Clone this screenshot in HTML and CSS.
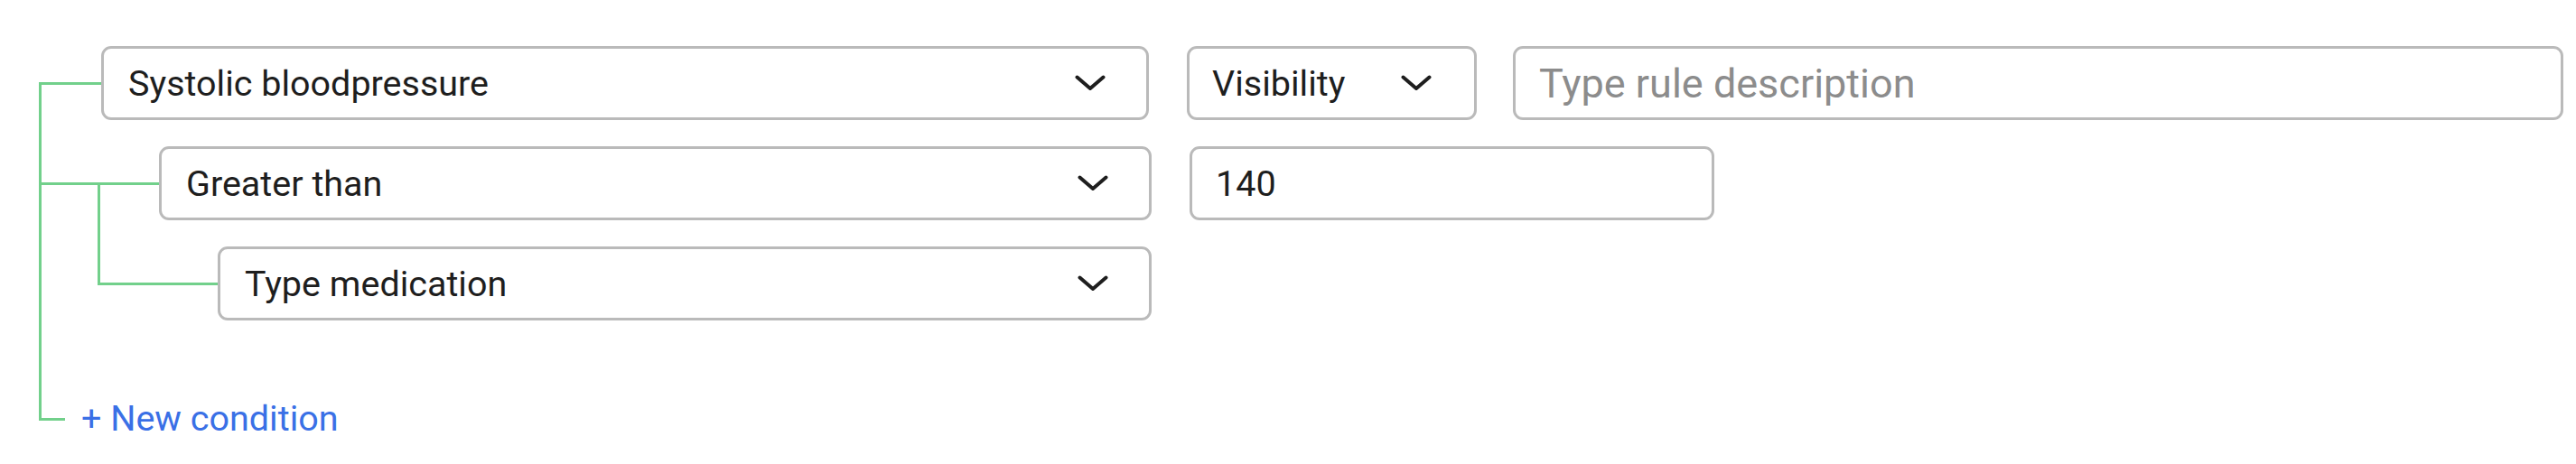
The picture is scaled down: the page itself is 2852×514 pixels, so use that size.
FILE: index.html
```html
<!DOCTYPE html>
<html lang="en">
<head>
<meta charset="utf-8">
<title>Rule conditions</title>
<link rel="stylesheet" href="styles.css">
</head>
<body>
<div class="tree">
  <div class="row">
    <div class="elbow e1">
      <span class="up first"></span>
      <span class="down"></span>
    </div>
    <div class="select s1">
      <span class="label">Systolic bloodpressure</span>
      <svg class="chev" viewBox="0 0 34 18" width="34" height="18"><polyline points="2.5,2.5 17,15 31.5,2.5"/></svg>
    </div>
    <div class="select vis">
      <span class="label">Visibility</span>
      <svg class="chev" viewBox="0 0 34 18" width="34" height="18"><polyline points="2.5,2.5 17,15 31.5,2.5"/></svg>
    </div>
    <input class="field desc" type="text" placeholder="Type rule description">
  </div>

  <div class="row">
    <div class="elbow e2">
      <span class="up"></span>
      <span class="down"><span class="sub"></span></span>
    </div>
    <div class="select s2">
      <span class="label">Greater than</span>
      <svg class="chev" viewBox="0 0 34 18" width="34" height="18"><polyline points="2.5,2.5 17,15 31.5,2.5"/></svg>
    </div>
    <input class="field num" type="text" value="140">
  </div>

  <div class="row">
    <div class="elbow e3">
      <span class="up pass"><span class="sub-up"></span></span>
      <span class="down"></span>
    </div>
    <div class="select s3 spaced">
      <span class="label">Type medication</span>
      <svg class="chev" viewBox="0 0 34 18" width="34" height="18"><polyline points="2.5,2.5 17,15 31.5,2.5"/></svg>
    </div>
  </div>

  <div class="row">
    <div class="elbow e4">
      <span class="up"></span>
      <span class="down last"></span>
    </div>
    <a class="add" href="#">+ New condition</a>
  </div>
</div>
</body>
</html>
```

FILE: styles.css
```css
* {
  box-sizing: border-box;
}

body {
  margin: 0;
  background: #ffffff;
  font-family: Roboto, "Liberation Sans", Arial, sans-serif;
  color: #202020;
}

.tree {
  display: flex;
  flex-direction: column;
  padding: 51px 0 0 43px;
}

.row {
  display: flex;
  align-items: stretch;
}

/* connector lines */
.elbow {
  flex: none;
  display: flex;
  flex-direction: column;
}

.e1 { width: 69px; }
.e2 { width: 133px; }
.e3 { width: 198px; }
.e4 { width: 29px; }

.up {
  display: flex;
  height: 43px;
  border-left: 3px solid #72d08b;
  border-bottom: 3px solid #72d08b;
}

.up.first {
  border-left: none;
}

.up.pass {
  border-bottom: none;
}

.down {
  display: flex;
  flex: 1;
  border-left: 3px solid #72d08b;
}

.down.last {
  border-left: none;
}

.sub {
  margin-left: 62px;
  border-left: 3px solid #72d08b;
}

.sub-up {
  flex: 1;
  margin-left: 62px;
  border-left: 3px solid #72d08b;
  border-bottom: 3px solid #72d08b;
}

/* controls */
.select,
.field {
  flex: none;
  height: 82px;
  margin-right: 42px;
  margin-bottom: 29px;
  border: 3px solid #bababa;
  border-radius: 11px;
  background: #ffffff;
  font-family: Roboto, "Liberation Sans", Arial, sans-serif;
  font-size: 39.5px;
  color: #1e1e1e;
}

.select {
  display: flex;
  align-items: center;
  justify-content: space-between;
  padding: 0 45px 0 27px;
}

.select.spaced {
  margin-bottom: 68px;
}

.s1 { width: 1160px; }
.s2 { width: 1099px; }
.s3 { width: 1034px; }

.vis {
  width: 321px;
  margin-right: 40px;
  padding-right: 47px;
  padding-left: 25px;
}

.label {
  white-space: nowrap;
}

.chev {
  display: block;
  flex: none;
}

.chev polyline {
  fill: none;
  stroke: #1e1e1e;
  stroke-width: 4;
  stroke-linecap: round;
  stroke-linejoin: round;
}

.field {
  padding: 0 26px;
  outline: none;
}

.field::placeholder {
  color: #8c8c8c;
  opacity: 1;
}

.desc {
  width: 1163px;
  font-size: 45px;
}

.num {
  width: 581px;
}

.add {
  margin-left: 18px;
  height: 82px;
  line-height: 82px;
  font-size: 39.5px;
  color: #3a70e6;
  text-decoration: none;
  white-space: nowrap;
}
```
